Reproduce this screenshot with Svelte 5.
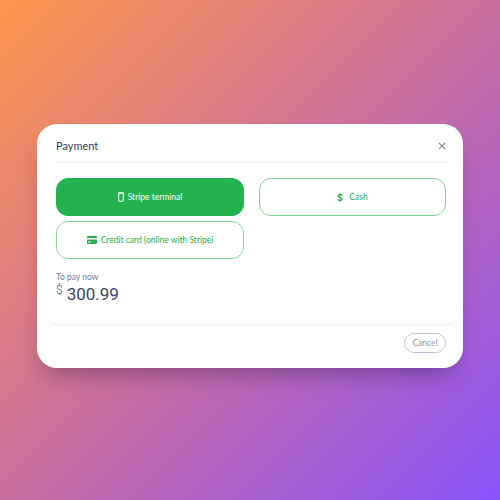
<script>
  const methods = [
    { id: 'terminal', label: 'Stripe terminal', icon: 'phone', active: true },
    { id: 'cash', label: 'Cash', icon: 'dollar', active: false },
    { id: 'card', label: 'Credit card (online with Stripe)', icon: 'card', active: false }
  ];
</script>

<div class="page">
  <div class="modal">
    <header class="modal-header">
      <h2>Payment</h2>
      <button class="close" aria-label="Close">
        <svg viewBox="0 0 10 10" width="8" height="8" fill="none" stroke="currentColor" stroke-width="1.4">
          <path d="M1 1l8 8M9 1l-8 8" />
        </svg>
      </button>
    </header>

    <div class="modal-body">
      <div class="methods">
        {#each methods as m}
          <button class="method" class:active={m.active}>
            {#if m.icon === 'phone'}
              <svg class="icon" viewBox="0 0 6 10" width="6" height="10" fill="none" stroke="currentColor" stroke-width="1.1">
                <rect x="0.7" y="0.8" width="4.6" height="8.4" rx="0.9" />
                <path d="M1.5 1h3" stroke-width="1.6" />
              </svg>
            {:else if m.icon === 'dollar'}
              <svg class="icon dollar" viewBox="0 0 8 12" width="6" height="9" fill="none" stroke="currentColor" stroke-width="1.5">
                <path d="M7 3.4C6.6 2.5 5.4 2.2 4 2.2 2.5 2.2 1.2 2.8 1.2 4 1.2 6.4 7 5.4 7 8 7 9.3 5.5 9.8 4 9.8 2.5 9.8 1.3 9.4 1 8.4" />
                <path d="M4 0v12" stroke-width="1.3" />
              </svg>
            {:else}
              <svg class="icon" viewBox="0 0 10 8" width="10" height="8" fill="currentColor">
                <path d="M0 1a1 1 0 0 1 1-1h8a1 1 0 0 1 1 1v1H0z" />
                <path d="M0 3.4h10V7a1 1 0 0 1-1 1H1a1 1 0 0 1-1-1zM1.2 5.4v1h2.6v-1z" fill-rule="evenodd" />
              </svg>
            {/if}
            <span>{m.label}</span>
          </button>
        {/each}
      </div>

      <div class="total">
        <div class="total-label">To pay now</div>
        <div class="total-value"><sup>$</sup><span>300.99</span></div>
      </div>
    </div>

    <footer class="modal-footer">
      <button class="cancel">Cancel</button>
    </footer>
  </div>
</div>

<style>
  :global(body) { margin: 0; }

  .page {
    width: 500px;
    height: 500px;
    box-sizing: border-box;
    padding-bottom: 8px;
    display: flex;
    align-items: center;
    justify-content: center;
    background: linear-gradient(135deg, #ff964c 0%, #c96fa0 50%, #8a52fb 100%);
    font-family: Lato, "Noto Sans", sans-serif;
  }

  .modal {
    width: 426px;
    height: 244px;
    box-sizing: border-box;
    padding: 0 11px 0 15px;
    display: flex;
    flex-direction: column;
    background: #fff;
    border-radius: 20px;
    box-shadow: 0 14px 22px -8px rgba(50, 25, 70, 0.42);
  }

  .modal-header {
    height: 39px;
    flex-shrink: 0;
    display: flex;
    align-items: center;
    justify-content: space-between;
    padding: 5px 6px 0 4px;
    box-sizing: border-box;
    border-bottom: 1px solid #f3f3f4;
  }
  .modal-header h2 {
    margin: 0;
    font-size: 11px;
    font-weight: 400;
    color: #2f3a58;
  }
  .close {
    display: flex;
    padding: 0;
    border: none;
    background: none;
    color: #85858c;
  }

  .modal-body {
    flex: 1;
    padding: 15px 6px 0 4px;
  }

  .methods {
    display: grid;
    grid-template-columns: 188px 187px;
    column-gap: 15px;
    row-gap: 5px;
  }
  .method {
    height: 38px;
    display: flex;
    align-items: center;
    justify-content: center;
    gap: 4px;
    padding: 0;
    border: 1px solid #7fd49a;
    border-radius: 12px;
    background: #fff;
    color: #22b14c;
    font: inherit;
    font-size: 8.5px;
  }
  .method.active {
    background: #22b34e;
    border-color: #22b34e;
    color: #fff;
  }
  .icon { flex-shrink: 0; }
  .dollar { margin-right: 2px; }

  .total { margin-top: 13px; }
  .total-label {
    font-size: 8.5px;
    line-height: 10px;
    color: #6d7ba3;
  }
  .total-value {
    display: flex;
    align-items: flex-start;
    gap: 4px;
    margin-top: 1px;
    font-family: Roboto, sans-serif;
    font-size: 17px;
    line-height: 22px;
    color: #3c4866;
  }
  .total-value sup {
    font-size: 12px;
    line-height: 14px;
    font-weight: 300;
  }

  .modal-footer {
    height: 44px;
    flex-shrink: 0;
    display: flex;
    align-items: center;
    justify-content: flex-end;
    padding: 0 6px 8px 0;
    box-sizing: border-box;
    border-top: 1px solid #f0f0f2;
  }
  .cancel {
    width: 42px;
    height: 20px;
    padding: 0;
    border: 1px solid #bcc4d6;
    border-radius: 10px;
    background: #fff;
    color: #8d97b0;
    font: inherit;
    font-size: 8.5px;
  }
</style>
